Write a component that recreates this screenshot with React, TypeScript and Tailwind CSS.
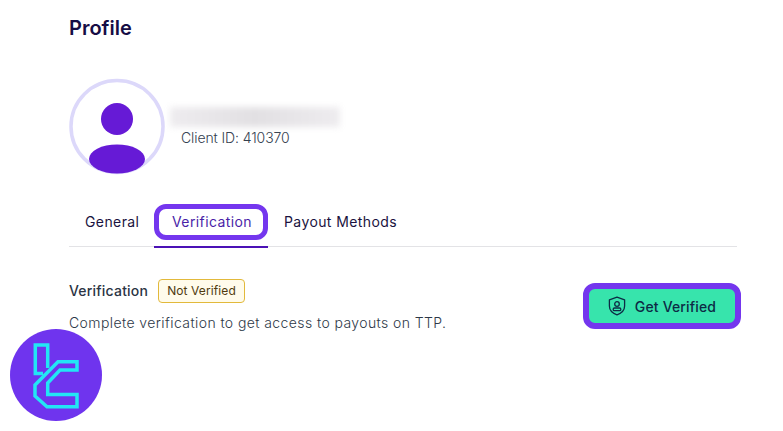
function Avatar() {
  return (
    <svg width="97" height="97" viewBox="0 0 97 97" className="shrink-0">
      <circle cx="48" cy="48.5" r="46" fill="#fff" stroke="#dcd8fa" strokeWidth="3.5" />
      <circle cx="48" cy="41" r="16" fill="#661ad6" />
      <ellipse cx="48" cy="81" rx="28" ry="14.5" fill="#661ad6" />
    </svg>
  );
}

function ShieldIcon() {
  return (
    <svg width="18" height="20" viewBox="0 0 18 20" fill="none" stroke="#0d2b45" strokeWidth="1.3" strokeLinejoin="round">
      <path d="M9 1.2 16.6 3.8V10c0 4.2-3.2 7.2-7.6 8.8C4.6 17.2 1.4 14.2 1.4 10V3.8Z" />
      <circle cx="9" cy="8" r="2.3" />
      <rect x="5.2" y="12" width="7.6" height="2.6" rx="1.2" />
    </svg>
  );
}

function Logo() {
  return (
    <div className="absolute left-[10px] top-[329px] h-[92px] w-[92px] rounded-full bg-[#6f34ee]">
      <svg width="92" height="92" viewBox="0 0 92 92" fill="none" stroke="#22e6f5" strokeWidth="3.5">
        <path d="M37.7 39V16H25.3V44.5H33" />
        <path d="M48 32.7H67V41H50L37.7 54V65.5H67V77.7H37L25 67V56Z" />
      </svg>
    </div>
  );
}

export default function App() {
  return (
    <div className="relative h-[431px] w-[783px] overflow-hidden bg-white font-['Inter',sans-serif] text-[#1a1340]">
      <div className="pl-[69px] pr-[46px] pt-[16px]">
        <h1 className="text-[20px] font-semibold leading-[24px] text-[#160d45]">Profile</h1>

        <div className="mt-[38px] flex items-center">
          <Avatar />
          <div className="ml-[4px] mt-[2px]">
            <div className="h-[20px] w-[170px] bg-gradient-to-r from-[#eeecef] via-[#e2e0e3] to-[#eeecef] blur-[3px]" />
            <p className="ml-[11px] mt-[1px] text-[14px] font-light leading-[20px] tracking-[-0.1px] text-[#33404f]">Client ID: 410370</p>
          </div>
        </div>

        <div className="mt-[29px] flex h-[43px] items-start border-b border-[#e3e3e6] pl-[16px] text-[14px] leading-[36px] tracking-[0.4px]">
          <span className="w-[69px]">General</span>
          <div className="relative mr-[16px] h-[43px] w-[114px]">
            <div className="flex h-[36px] items-center justify-center rounded-[12px] border-[5px] border-[#7436ee] pl-[2px] text-[#4a1fa8]">
              Verification
            </div>
            <div className="absolute bottom-[-1px] left-0 h-[2px] w-[114px] bg-[#4b12b5]" />
          </div>
          <span>Payout Methods</span>
        </div>

        <div className="mt-[32px] flex items-start justify-between">
          <div>
            <div className="flex items-center gap-[10px]">
              <span className="mt-[-1px] text-[14px] font-medium tracking-[0.2px] text-[#2b3444]">Verification</span>
              <span className="flex h-[24px] items-center rounded-[4px] border border-[#e2b93b] bg-[#fffbeb] px-[8px] text-[12px] tracking-[0.1px] text-[#4f3a0e]">
                Not Verified
              </span>
            </div>
            <p className="mt-[10px] text-[14px] font-light leading-[20px] tracking-[0.41px] text-[#2d3847]">
              Complete verification to get access to payouts on TTP.
            </p>
          </div>
          <button className="mr-[-4px] mt-[4px] flex h-[46px] w-[158px] items-center justify-center gap-[9px] rounded-[12px] border-[6px] border-[#7436ee] bg-[#37e4ac] text-[14px] font-medium tracking-[0.15px] text-[#0d2b45]">
            <ShieldIcon />
            Get Verified
          </button>
        </div>
      </div>
      <Logo />
    </div>
  );
}
